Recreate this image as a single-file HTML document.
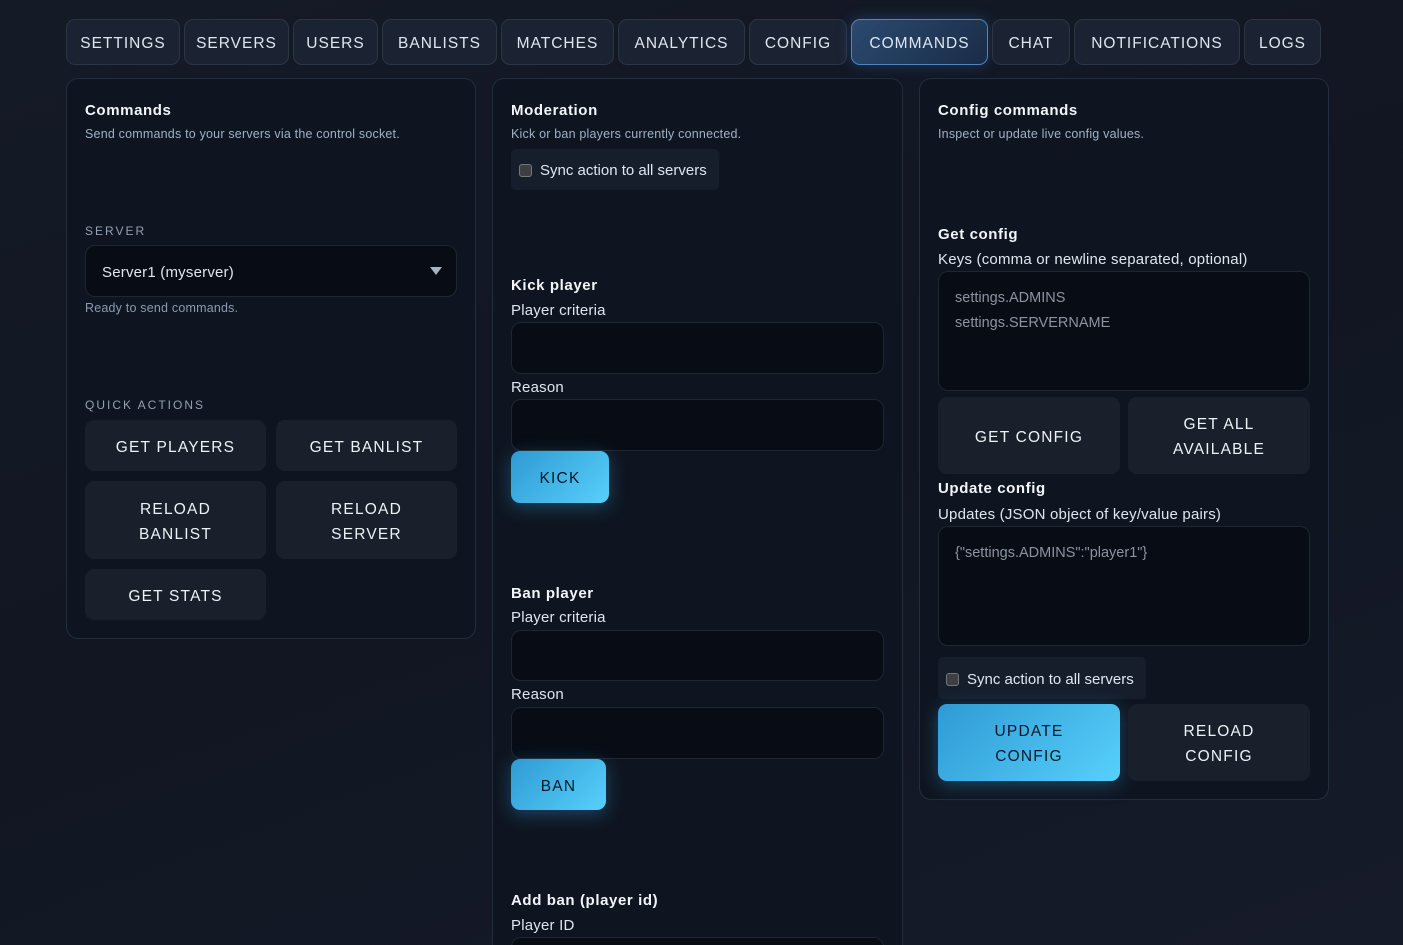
<!DOCTYPE html>
<html style="width:1403px;height:945px;overflow:hidden"><head><meta charset="utf-8"><style>
*{box-sizing:border-box;margin:0;padding:0}
body{width:1403px;height:945px;overflow:hidden;background:linear-gradient(160deg,#141a26 0%,#111622 50%,#161b2a 100%);font-family:"Liberation Sans",sans-serif;color:#e6ebf2;position:relative}
.a{position:absolute}
.tab{position:absolute;top:19px;height:46px;border:1px solid #2a3546;border-radius:9px;background:#1b2332;color:#dfe6ef;font-size:15.5px;letter-spacing:1px;display:flex;align-items:center;justify-content:center;padding-top:3px}
.tab.on{background:linear-gradient(135deg,#2a4a70,#1a2c46);border-color:#4c84c4;box-shadow:0 0 14px rgba(60,120,200,.35)}
.panel{position:absolute;border:1px solid #1f2e42;border-radius:12px;background:#0f1520}
.h{position:absolute;font-size:15px;font-weight:bold;letter-spacing:.6px;color:#f2f5f9}
.sub{position:absolute;font-size:12.5px;color:#9fb0c6;letter-spacing:.2px}
.lbl{position:absolute;font-size:15px;color:#dfe6ef;letter-spacing:.2px}
.cap{position:absolute;font-size:12px;letter-spacing:2px;color:#93a0b2}
.inp{position:absolute;background:#080c15;border:1px solid #1e2633;border-radius:10px}
.btn{position:absolute;background:#1a202b;border-radius:9px;color:#eef2f7;font-size:15.5px;letter-spacing:1.2px;display:flex;align-items:center;justify-content:center;text-align:center;line-height:25px;padding-top:3px}
.pri{background:linear-gradient(135deg,#2f9ad4,#57d0fb);color:#0a1826;box-shadow:0 4px 18px rgba(50,170,230,.35)}
.chk{position:absolute;background:#161e2c;border-radius:5px;font-size:15px;color:#dfe6ef;display:flex;align-items:center;padding-left:8px;padding-top:2px}
.chk i{display:inline-block;width:13px;height:13px;background:#3d3f44;border:1px solid #777;border-radius:3px;margin-right:8px}
.ph{position:absolute;font-size:14.5px;color:#8c93a0;line-height:25px}
</style></head><body>
<div class="tab" style="left:66px;width:114px">SETTINGS</div>
<div class="tab" style="left:184px;width:105px">SERVERS</div>
<div class="tab" style="left:293px;width:85px">USERS</div>
<div class="tab" style="left:382px;width:115px">BANLISTS</div>
<div class="tab" style="left:501px;width:113px">MATCHES</div>
<div class="tab" style="left:618px;width:127px">ANALYTICS</div>
<div class="tab" style="left:749px;width:98px">CONFIG</div>
<div class="tab on" style="left:851px;width:137px">COMMANDS</div>
<div class="tab" style="left:992px;width:78px">CHAT</div>
<div class="tab" style="left:1074px;width:166px">NOTIFICATIONS</div>
<div class="tab" style="left:1244px;width:77px">LOGS</div>

<div class="panel" style="left:66px;top:78px;width:410px;height:561px"></div>
<div class="h" style="left:85px;top:102px">Commands</div>
<div class="sub" style="left:85px;top:127px">Send commands to your servers via the control socket.</div>
<div class="cap" style="left:85px;top:224px">SERVER</div>
<div class="inp" style="left:85px;top:245px;width:372px;height:52px"></div>
<div class="lbl" style="left:102px;top:264px">Server1 (myserver)</div>
<div class="a" style="left:430px;top:267px;width:0;height:0;border-left:6px solid transparent;border-right:6px solid transparent;border-top:8px solid #a9b2c3"></div>
<div class="sub" style="left:85px;top:301px;color:#8a9ab0">Ready to send commands.</div>
<div class="cap" style="left:85px;top:398px">QUICK ACTIONS</div>
<div class="btn" style="left:85px;top:420px;width:181px;height:51px">GET PLAYERS</div>
<div class="btn" style="left:276px;top:420px;width:181px;height:51px">GET BANLIST</div>
<div class="btn" style="left:85px;top:481px;width:181px;height:78px">RELOAD<br>BANLIST</div>
<div class="btn" style="left:276px;top:481px;width:181px;height:78px">RELOAD<br>SERVER</div>
<div class="btn" style="left:85px;top:569px;width:181px;height:51px">GET STATS</div>

<div class="panel" style="left:492px;top:78px;width:411px;height:900px"></div>
<div class="h" style="left:511px;top:102px">Moderation</div>
<div class="sub" style="left:511px;top:127px">Kick or ban players currently connected.</div>
<div class="chk" style="left:511px;top:149px;width:208px;height:41px"><i></i>Sync action to all servers</div>
<div class="h" style="left:511px;top:277px">Kick player</div>
<div class="lbl" style="left:511px;top:302px">Player criteria</div>
<div class="inp" style="left:511px;top:322px;width:373px;height:52px"></div>
<div class="lbl" style="left:511px;top:379px">Reason</div>
<div class="inp" style="left:511px;top:399px;width:373px;height:52px"></div>
<div class="btn pri" style="left:511px;top:451px;width:98px;height:52px">KICK</div>
<div class="h" style="left:511px;top:585px">Ban player</div>
<div class="lbl" style="left:511px;top:609px">Player criteria</div>
<div class="inp" style="left:511px;top:630px;width:373px;height:51px"></div>
<div class="lbl" style="left:511px;top:686px">Reason</div>
<div class="inp" style="left:511px;top:707px;width:373px;height:52px"></div>
<div class="btn pri" style="left:511px;top:759px;width:95px;height:51px">BAN</div>
<div class="h" style="left:511px;top:892px">Add ban (player id)</div>
<div class="lbl" style="left:511px;top:917px">Player ID</div>
<div class="inp" style="left:511px;top:937px;width:373px;height:52px"></div>

<div class="panel" style="left:919px;top:78px;width:410px;height:722px"></div>
<div class="h" style="left:938px;top:226px">Get config</div>
<div class="h" style="left:938px;top:102px">Config commands</div>
<div class="sub" style="left:938px;top:127px">Inspect or update live config values.</div>
<div class="lbl" style="left:938px;top:251px">Keys (comma or newline separated, optional)</div>
<div class="inp" style="left:938px;top:271px;width:372px;height:120px"></div>
<div class="ph" style="left:955px;top:286px">settings.ADMINS<br>settings.SERVERNAME</div>
<div class="btn" style="left:938px;top:397px;width:182px;height:77px">GET CONFIG</div>
<div class="btn" style="left:1128px;top:397px;width:182px;height:77px">GET ALL<br>AVAILABLE</div>
<div class="h" style="left:938px;top:480px">Update config</div>
<div class="lbl" style="left:938px;top:506px">Updates (JSON object of key/value pairs)</div>
<div class="inp" style="left:938px;top:526px;width:372px;height:120px"></div>
<div class="ph" style="left:955px;top:541px">{"settings.ADMINS":"player1"}</div>
<div class="chk" style="left:938px;top:657px;width:208px;height:42px"><i></i>Sync action to all servers</div>
<div class="btn pri" style="left:938px;top:704px;width:182px;height:77px">UPDATE<br>CONFIG</div>
<div class="btn" style="left:1128px;top:704px;width:182px;height:77px">RELOAD<br>CONFIG</div>
</body></html>
